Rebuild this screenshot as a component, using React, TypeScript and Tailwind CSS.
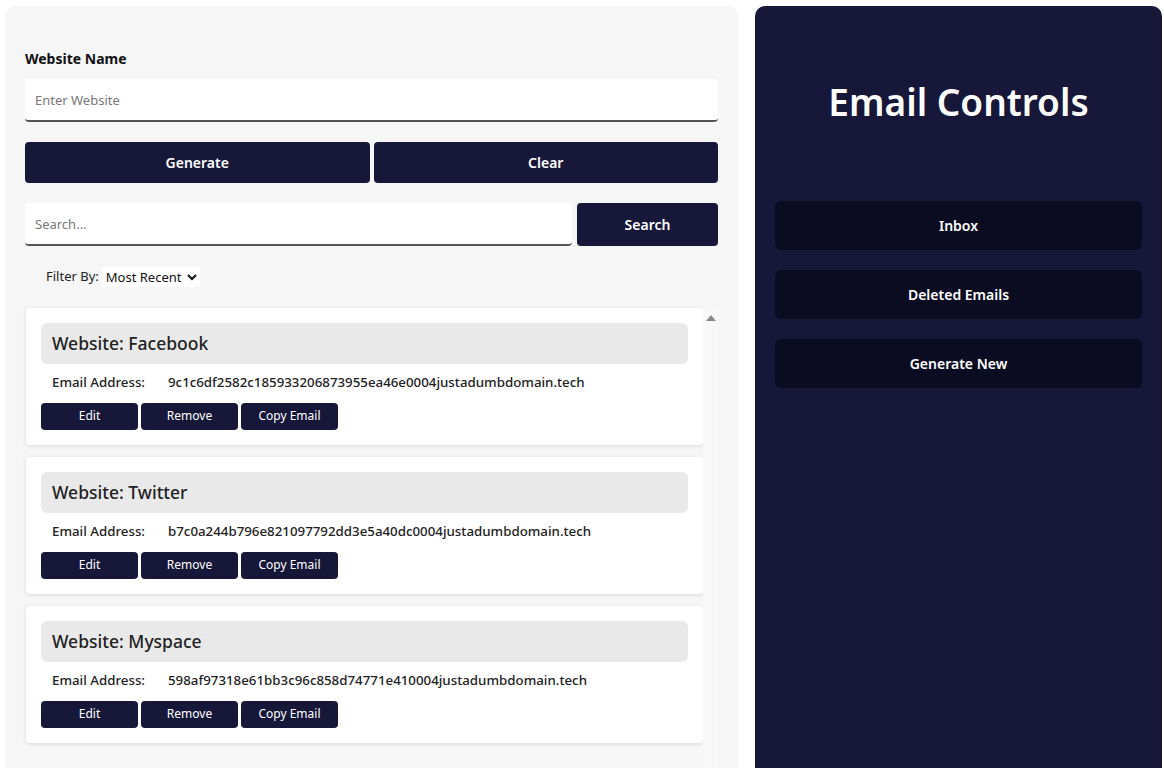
import { useState } from "react";

type Entry = {
  id: number;
  website: string;
  email: string;
};

const ENTRIES: Entry[] = [
  { id: 1, website: "Facebook", email: "9c1c6df2582c185933206873955ea46e0004justadumbdomain.tech" },
  { id: 2, website: "Twitter", email: "b7c0a244b796e821097792dd3e5a40dc0004justadumbdomain.tech" },
  { id: 3, website: "Myspace", email: "598af97318e61bb3c96c858d74771e410004justadumbdomain.tech" },
];

function EntryCard({ entry }: { entry: Entry }) {
  return (
    <div className="rounded-[4px] bg-white p-[15px] shadow-[0_1px_4px_rgba(0,0,0,0.12)]">
      <div className="flex h-[41px] items-center rounded-[6px] bg-[#e9e9e9] px-[11px]">
        <h3 className="text-[17.5px] font-medium text-[#222]">Website: {entry.website}</h3>
      </div>
      <div className="mt-[9px] flex items-center px-[11px] text-[13.3px] font-medium text-[#222]">
        <span className="w-[116px]">Email Address:</span>
        <span>{entry.email}</span>
      </div>
      <div className="mt-[10px] flex gap-[3px]">
        {["Edit", "Remove", "Copy Email"].map((label) => (
          <button
            key={label}
            className="h-[27px] w-[97px] rounded-[4px] bg-[#17173a] text-[12px] text-white"
          >
            {label}
          </button>
        ))}
      </div>
    </div>
  );
}

export default function App() {
  const [website, setWebsite] = useState("");
  const [search, setSearch] = useState("");

  return (
    <div
      className="flex h-screen gap-[17px] overflow-hidden bg-white pl-[5px] pt-[6px]"
      style={{ fontFamily: '"Noto Sans", "Open Sans", sans-serif' }}
    >
      <section className="flex h-[800px] w-[733px] shrink-0 flex-col rounded-[10px] bg-[#f6f6f6] px-[20px] pt-[42px]">
        <label className="text-[14px] font-bold text-[#111]">Website Name</label>
        <input
          value={website}
          onChange={(e) => setWebsite(e.target.value)}
          placeholder="Enter Website"
          className="mt-[10px] h-[43px] w-full rounded-[4px] border-b-2 border-[#555] bg-white px-[10px] text-[13px] outline-none placeholder:text-[#777]"
        />

        <div className="mt-[20px] flex gap-[4px]">
          <button className="h-[41px] flex-1 rounded-[4px] bg-[#17173a] text-[14px] font-semibold text-white">
            Generate
          </button>
          <button className="h-[41px] flex-1 rounded-[4px] bg-[#17173a] text-[14px] font-semibold text-white">
            Clear
          </button>
        </div>

        <div className="mt-[20px] flex gap-[5px]">
          <input
            value={search}
            onChange={(e) => setSearch(e.target.value)}
            placeholder="Search..."
            className="h-[43px] flex-1 rounded-[4px] border-b-2 border-[#555] bg-white px-[10px] text-[13px] outline-none placeholder:text-[#777]"
          />
          <button className="h-[43px] w-[141px] rounded-[4px] bg-[#17173a] text-[14px] font-semibold text-white">
            Search
          </button>
        </div>

        <div className="mt-[21px] flex items-center gap-[3px] pl-[21px] text-[13px] text-[#222]">
          <span>Filter By:</span>
          <select className="h-[20px] w-[98px] bg-white text-[13px] text-[#111] outline-none">
            <option>Most Recent</option>
            <option>Oldest</option>
          </select>
        </div>

        <div className="mt-[21px] flex flex-1 pl-[1px]">
          <div className="flex flex-1 flex-col gap-[12px]">
            {ENTRIES.map((entry) => (
              <EntryCard key={entry.id} entry={entry} />
            ))}
          </div>
          <div className="flex w-[15px] justify-center bg-[#f8f8f8] pt-[7px]">
            <span className="h-0 w-0 border-x-[5px] border-b-[6px] border-x-transparent border-b-[#8a8a8a]" />
          </div>
        </div>
      </section>

      <aside className="flex h-[800px] w-[407px] shrink-0 flex-col rounded-[10px] bg-[#17173a] px-[20px]">
        <h1 className="mt-[68px] text-center text-[37px] font-semibold text-white">Email Controls</h1>
        <div className="mt-[71px] flex flex-col gap-[20px]">
          {["Inbox", "Deleted Emails", "Generate New"].map((label) => (
            <button
              key={label}
              className="h-[49px] rounded-[6px] bg-[#0b0b22] text-[14px] font-semibold text-white"
            >
              {label}
            </button>
          ))}
        </div>
      </aside>
    </div>
  );
}
